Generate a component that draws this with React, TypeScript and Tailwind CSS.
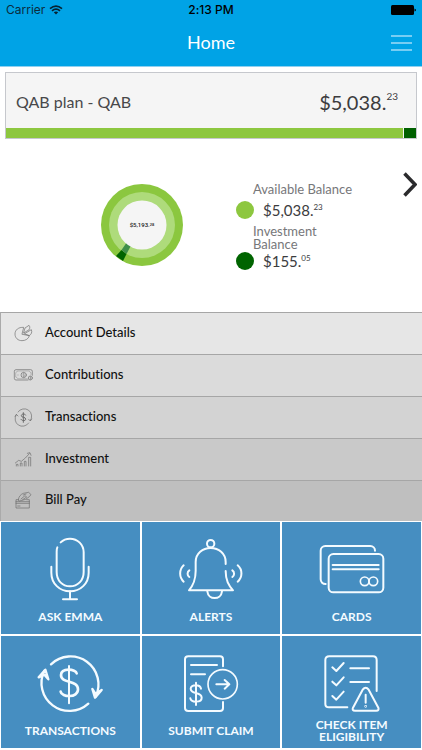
import type { ReactNode } from "react";

const AVAILABLE = 5038.23;
const INVESTED = 155.05;

function TileIcon({ x, children }: { x: number; children: ReactNode }) {
  return (
    <svg
      viewBox={`${x} 42 240 216`}
      className="h-18 w-20"
      fill="none"
      stroke="currentColor"
      strokeWidth={6}
      strokeLinecap="round"
      strokeLinejoin="round"
      aria-hidden="true"
    >
      {children}
    </svg>
  );
}

function RowIcon({ y, children }: { y: number; children: ReactNode }) {
  return (
    <svg
      viewBox={`39 ${y} 66 60`}
      className="h-5 w-[22px] shrink-0 text-[#6b6b6b]"
      fill="none"
      stroke="currentColor"
      strokeWidth={2}
      strokeLinecap="round"
      strokeLinejoin="round"
      aria-hidden="true"
    >
      {children}
    </svg>
  );
}

const MENU_ROWS = [
  {
    label: "Account Details",
    color: "bg-[#e6e6e6]",
    icon: (
      <RowIcon y={54}>
        <path d="M70 67 C55 66 45 75 45 87 C45 99 54 107 66 107 C77 107 86 101 88 92 L67 88 Z" />
        <path d="M71 83 L75 69 L87 61 C90 64 90 69 88 73 Z" />
        <path d="M74 86 L94 74 C97 82 94 88 89 91 Z" />
      </RowIcon>
    ),
  },
  {
    label: "Contributions",
    color: "bg-[#dbdbdb]",
    icon: (
      <RowIcon y={180}>
        <path d="M84 225 H48 Q43 225 43 220 V199 Q43 194 48 194 H92 Q97 194 97 199 V211" />
        <path d="M82 221 H53 Q52 217 47 216 V203 Q51 202 52 198 H88 Q89 202 93 203 V209" strokeWidth={1} />
        <circle cx="71" cy="210" r="8" />
        <path d="M74 207 C71 204 67 206 69 209 C70 211 74 210 74 213 C74 216 69 215 68 213 M71 203 V217 M53 210 H55" strokeWidth={1} />
        <circle cx="91" cy="219" r="6" />
        <path d="M91 215 V223" />
      </RowIcon>
    ),
  },
  {
    label: "Transactions",
    color: "bg-[#d3d3d3]",
    icon: (
      <RowIcon y={34}>
        <path d="M54 49 A22 22 0 0 1 91 75 M86 82 A22 22 0 0 1 49 57" />
        <path d="M86 71 L91 76 L95 70 M45 62 L49 56 L54 61" />
        <path d="M77 58 C75 54 65 53 64 60 C64 67 77 63 77 70 C77 77 65 76 63 71 M70 51 V80" strokeWidth={3} />
      </RowIcon>
    ),
  },
  {
    label: "Investment",
    color: "bg-[#c9c9c9]",
    icon: (
      <RowIcon y={160}>
        <path d="M46 202 L56 194 L64 197 L76 187 L88 174 M82 173 L90 171 L93 179" />
        <path d="M49 211 V206 H54 V211 M61 211 V202 H66 V211 M73 211 V197 H78 V211 M86 211 V185 H92 V211" />
      </RowIcon>
    ),
  },
  {
    label: "Bill Pay",
    color: "bg-[#bfbfbf]",
    icon: (
      <RowIcon y={286}>
        <path d="M55 315 H48 V340 H88 V315 H80 M48 321 H88 M48 326 H88 M53 334 H60" />
        <path d="M58 319 L77 314 L88 306 L93 300 L86 293 L70 296 C62 299 56 306 55 315 Z" />
        <path d="M63 313 L75 303 L80 307 L68 315 M70 301 L78 298" />
      </RowIcon>
    ),
  },
];

const TILES = [
  {
    label: "ASK EMMA",
    icon: (
      <TileIcon x={91}>
        <path d="M183 73 C191 65 201 62 211 62 C234 62 252 80 252 103 V162 C252 188 234 205 211 205 S171 188 171 162 V101 C171 96 171 92 173 88" />
        <path d="M155 146 V164 C155 197 180 220 211 220 S267 197 267 164 V146" />
        <path d="M211 220 V244 M190 244 H232" />
      </TileIcon>
    ),
  },
  {
    label: "ALERTS",
    icon: (
      <TileIcon x={93}>
        <circle cx="212" cy="77" r="11" />
        <path d="M257 138 V132 C257 106 236 90 212 90 S167 106 167 132 V158 C167 188 159 202 147 217 H279 C266 202 257 188 257 159" />
        <path d="M202 220 C205 247 243 247 246 220" />
        <path d="M131 142 C117 155 117 178 131 191 M148 157 C141 162 141 172 148 177" />
        <path d="M293 142 C308 155 308 178 293 191 M277 157 C284 162 284 172 277 177" />
      </TileIcon>
    ),
  },
  {
    label: "CARDS",
    icon: (
      <TileIcon x={95}>
        <path d="M136 198 C127 198 121 192 121 184 V98 C121 90 127 84 135 84 H270 C278 84 284 90 284 98" />
        <rect x="145" y="108" width="164" height="115" rx="14" />
        <path d="M157 141 H295 M157 154 H295" />
        <circle cx="253" cy="190" r="13" strokeWidth={5} />
        <circle cx="279" cy="190" r="13" strokeWidth={5} />
      </TileIcon>
    ),
  },
  {
    label: "TRANSACTIONS",
    icon: (
      <TileIcon x={91}>
        <g strokeWidth={7}>
          <path d="M154 97 A84 84 0 0 1 288 194" />
          <path d="M278 171 L286 197 L306 174 L287 185 Z" />
          <path d="M266 215 A84 84 0 0 1 134 116" />
          <path d="M117 136 L137 113 L146 142 L134 128 Z" />
        </g>
        <path
          d="M231 124 C229 111 185 106 184 129 C184 156 235 142 235 172 C235 199 186 196 183 179"
          strokeWidth={8}
        />
        <path d="M208 102 V214" strokeWidth={6} />
      </TileIcon>
    ),
  },
  {
    label: "SUBMIT CLAIM",
    icon: (
      <TileIcon x={93}>
        <path d="M249 103 V82 Q249 73 240 73 H145 Q135 73 135 82 V228 Q135 237 145 237 H240 Q249 237 249 228 V210" />
        <path d="M153 99 H231 M153 127 H195" />
        <circle cx="248" cy="157" r="44" strokeWidth={5} />
        <path d="M229 157 H267 M254 144 L268 157 L254 170" />
        <path d="M183 170 C181 157 152 156 152 170 C152 188 185 178 185 197 C185 213 153 212 151 199 M168 152 V219" />
      </TileIcon>
    ),
  },
  {
    label: "CHECK ITEM ELIGIBILITY",
    icon: (
      <TileIcon x={95}>
        <path d="M289 177 V84 Q289 73 278 73 H147 Q135 73 135 84 V216 Q135 226 146 226 H201" />
        <path d="M210 109 H266 M210 150 H266" />
        <path d="M156 106 L168 117 L190 93 M156 149 L168 160 L190 136 M156 192 L168 203 L190 179" />
        <path d="M247 173 Q256 161 265 173 L294 227 Q297 236 288 236 H224 Q214 236 218 227 Z" />
        <path d="M256 188 V212" />
        <circle cx="256" cy="223" r="1" />
      </TileIcon>
    ),
  },
];

function Donut() {
  return (
    <svg viewBox="-41 -41 82 82" className="h-[82px] w-[82px]" role="img" aria-label="Balance breakdown">
      <circle r="41" fill="#8bc73f" />
      <circle r="33" fill="#aedb7b" />
      {/* investment slice */}
      <path d="M-26 31 L-19 36 L-15.5 29 L-20.5 25 Z" fill="#006400" />
      <path d="M-20.5 25 L-15.5 29 L-11 20.5 L-15 17 Z" fill="#3f8f4a" />
      <circle r="24.5" fill="#f5f5f5" />
      <text textAnchor="middle" y="2" className="font-[Roboto,sans-serif]" fontSize="6" fontWeight="500" fill="#222">
        $5,193.
        <tspan fontSize="4" dy="-1">
          28
        </tspan>
      </text>
    </svg>
  );
}

function Money({ whole, cents }: { whole: string; cents: string }) {
  return (
    <span className="flex items-start leading-5 text-[#3c3c3e]">
      <span className="text-[15px]">{whole}</span>
      <span className="text-[8px] leading-[14px]">{cents}</span>
    </span>
  );
}

export default function App() {
  return (
    <div className="min-h-screen bg-white font-[Lato,sans-serif] [font-variant-ligatures:none]">
      <header className="border-b border-[#8fd0f0] bg-[#00a3e6]">
        <div className="grid h-5 grid-cols-3 items-center px-[6px] font-[Inter,sans-serif] text-xs text-black">
          <div className="flex items-center gap-1">
            <span className="text-[#0b2c3d]">Carrier</span>
            <svg viewBox="0 0 14 10" className="h-[10px] w-[14px]" fill="none" stroke="#062231" strokeWidth={1.7} aria-hidden="true">
              <path d="M1 3.6 Q7 -1.4 13 3.6 M3 5.8 Q7 2.4 11 5.8" />
              <path d="M4.8 7.3 Q7 5.6 9.2 7.3 L7 9.6 Z" fill="#062231" stroke="none" />
            </svg>
          </div>
          <div className="text-center font-medium">2:13 PM</div>
          <svg viewBox="0 0 25 10" className="h-[10px] w-[25px] justify-self-end" aria-hidden="true">
            <rect width="23" height="10" rx="1.5" />
            <path d="M23.5 3.5 Q25 4 25 5 T23.5 6.5 Z" />
          </svg>
        </div>
        <div className="grid h-[46px] grid-cols-3 items-center px-[10px]">
          <h1 className="col-start-2 pb-0.5 text-center text-lg text-white">Home</h1>
          <button type="button" aria-label="Menu" className="flex flex-col gap-[5px] justify-self-end">
            <span className="h-0.5 w-[21px] bg-[#77cdf3]" />
            <span className="h-0.5 w-[21px] bg-[#77cdf3]" />
            <span className="h-0.5 w-[21px] bg-[#77cdf3]" />
          </button>
        </div>
      </header>

      <main>
        <section className="mx-[5px] mt-[5px] border border-[#c6c8cd] bg-[#f5f5f5]">
          <div className="flex h-[55px] items-center justify-between pt-0.5 pr-[18px] pl-[10px] text-[#48484a]">
            <h2 className="text-base">QAB plan - QAB</h2>
            <p className="flex items-start leading-6 text-[#3c3c3e]">
              <span className="text-xl">$5,038.</span>
              <span className="text-[10px] leading-4">23</span>
            </p>
          </div>
          <div className="flex h-[10px] gap-px">
            <div className="bg-[#8dc73f]" style={{ flexGrow: AVAILABLE }} />
            <div className="bg-[#006000]" style={{ flexGrow: INVESTED }} />
          </div>
        </section>

        <section className="flex h-[173px] pr-[5px] pl-[101px]">
          <div className="mt-[45px] w-[135px] shrink-0">
            <Donut />
          </div>
          <dl className="mt-[42px] flex-1 text-[13px] leading-[13px] text-[#77777a]">
            <dt className="pt-0.5 pl-[17px]">Available Balance</dt>
            <dd className="mt-1 flex items-center gap-[9px]">
              <span className="size-[18px] rounded-full bg-[#8dc73f]" />
              <Money whole="$5,038." cents="23" />
            </dd>
            <dt className="w-24 pt-[5px] pl-[17px]">Investment Balance</dt>
            <dd className="flex items-center gap-[9px]">
              <span className="size-[18px] rounded-full bg-[#006400]" />
              <Money whole="$155." cents="05" />
            </dd>
          </dl>
          <button type="button" aria-label="Next account" className="mt-[33px] self-start">
            <svg viewBox="0 0 14 25" className="h-[25px] w-[14px]" fill="none" stroke="#2b2b2d" strokeWidth={3.5}>
              <path d="M1.5 1.5 L12 12.5 L1.5 23.5" />
            </svg>
          </button>
        </section>

        <nav className="border-l border-[#aaa]">
          {MENU_ROWS.map((row) => (
            <button
              key={row.label}
              type="button"
              className={`flex h-[42px] w-full items-center gap-[10px] border-t border-[#a6a6a6] pb-0.5 pl-3 text-left text-[13px] font-medium text-[#111] last:h-[41px] ${row.color}`}
            >
              {row.icon}
              {row.label}
            </button>
          ))}
        </nav>

        <div className="grid grid-cols-3 gap-0.5 p-px">
          {TILES.map((tile) => (
            <button
              key={tile.label}
              type="button"
              className="flex h-28 flex-col items-center bg-[#468ec1] pt-[10px] text-[#f4fbff]"
            >
              {tile.icon}
              <span className="flex h-[26px] w-24 items-center justify-center text-center text-xs leading-3 font-bold">
                {tile.label}
              </span>
            </button>
          ))}
        </div>
      </main>
    </div>
  );
}
